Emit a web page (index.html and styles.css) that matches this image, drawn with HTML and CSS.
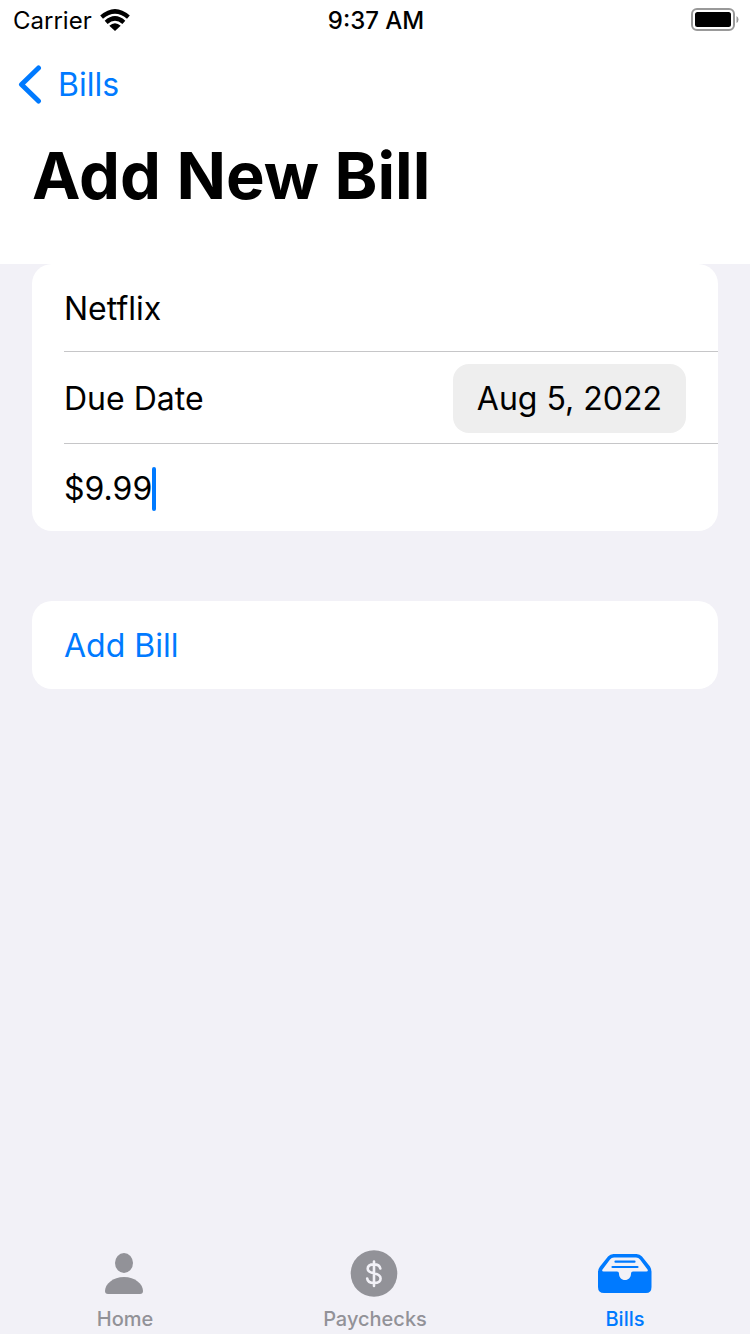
FILE: index.html
```html
<!DOCTYPE html>
<html lang="en">
<head>
<meta charset="utf-8">
<meta name="viewport" content="width=device-width, initial-scale=1">
<title>Add New Bill</title>
<link rel="stylesheet" href="styles.css">
</head>
<body>
<header class="header">
  <div class="status">
    <div class="carrier">
      <span>Carrier</span>
      <svg class="wifi" width="30" height="24" viewBox="0 0 30 24" aria-hidden="true">
        <path d="M0.200 6.600Q15-6.600 29.800 6.600L27 9.800Q15-0.400 3 9.800Z"/>
        <path d="M4.700 11.700Q15 2.500 25.300 11.700L22.400 14.900Q15 8.600 7.600 14.900Z"/>
        <path d="M9.300 16.700Q15 11.700 20.700 16.700L15 22Z"/>
      </svg>
    </div>
    <div class="time">9:37 AM</div>
    <svg class="battery" width="48" height="26" viewBox="0 0 48 26" aria-hidden="true">
      <rect x="1" y="1" width="42" height="21" rx="5" fill="none" stroke="#999" stroke-width="2"/>
      <rect x="4" y="4" width="36" height="15" rx="2.500"/>
      <path d="M45.500 8Q47.500 9 47.500 11.500T45.500 15Z" fill="#999"/>
    </svg>
  </div>
  <nav class="nav">
    <a class="back" href="#bills">
      <svg width="26" height="40" viewBox="0 0 26 40" aria-hidden="true">
        <path d="M22.500 3L5.500 19.500L22.500 36" fill="none" stroke="currentColor" stroke-width="5" stroke-linecap="round" stroke-linejoin="round"/>
      </svg>
      <span>Bills</span>
    </a>
  </nav>
  <h1 class="title">Add New Bill</h1>
</header>
<main class="content">
  <form class="form">
    <div class="card">
      <div class="row">
        <input class="field" type="text" value="Netflix" aria-label="Bill name">
      </div>
      <div class="row row-date">
        <label for="due">Due Date</label>
        <button class="date" id="due" type="button">Aug 5, 2022</button>
      </div>
      <div class="row">
        <input class="field amount" type="text" size="4" value="$9.99" aria-label="Amount">
        <span class="caret"></span>
      </div>
    </div>
    <div class="card">
      <button class="submit" type="button">Add Bill</button>
    </div>
  </form>
</main>
<nav class="tabs">
  <a class="tab" href="#home">
    <svg width="56" height="48" viewBox="0 0 56 48" aria-hidden="true">
      <ellipse cx="27" cy="14" rx="9" ry="10"/>
      <path d="M11 45Q8 45 8 42C8 35 16 28 27 28S46 35 46 42Q46 45 43 45Z"/>
    </svg>
    <span>Home</span>
  </a>
  <a class="tab" href="#paychecks">
    <svg width="56" height="48" viewBox="0 0 56 48" aria-hidden="true">
      <circle cx="27" cy="24.500" r="23.300"/>
      <path d="M33.300 19.500C32.800 16.700 30.500 15.400 27 15.400C23.300 15.400 20.700 17 20.700 19.800C20.700 22.600 23 23.500 27 24.300C31.200 25.200 33.600 26.300 33.600 29.500C33.600 32.400 30.800 34 27 34C23.300 34 20.600 32.500 20.200 29.500M27 12.500V37" fill="none" stroke="#f2f1f7" stroke-width="2.600" stroke-linecap="round"/>
    </svg>
    <span>Paychecks</span>
  </a>
  <a class="tab active" href="#bills" aria-current="page">
    <svg width="56" height="48" viewBox="0 0 56 48" aria-hidden="true">
      <path fill-rule="evenodd" d="M16.500 5H39.500Q43 5 45 7.500L53 17.500Q54.500 20 54.500 23V38Q54.500 44 49 44H7Q1 44 1 38V23Q1 20 3 17.500L11 7.500Q13 5 16.500 5ZM17 8.500Q14.500 8.500 13 10.500L5.500 20.500Q4.500 22.500 6.500 22.500H20Q22 22.500 22 24.500C22 28.500 24.500 31 28 31S34 28.500 34 24.500Q34 22.500 36 22.500H49.500Q51.500 22.500 50.500 20.500L43 10.500Q41.500 8.500 39 8.500Z"/>
      <path d="M18.500 12.700H37.500M15.500 18H40.500" fill="none" stroke="currentColor" stroke-width="2.200" stroke-linecap="round"/>
    </svg>
    <span>Bills</span>
  </a>
</nav>
</body>
</html>
```
FILE: styles.css
```css
* {
  box-sizing: border-box;
}

body {
  margin: 0;
  min-height: 100vh;
  display: flex;
  flex-direction: column;
  background: #f2f1f7;
  color: #000;
  font-family: Inter, "Liberation Sans", sans-serif;
  font-size: 32px;
  line-height: 40px;
}

input,
button {
  margin: 0;
  padding: 0;
  border: 0;
  background: none;
  color: inherit;
  font: inherit;
  text-align: left;
}

a {
  color: inherit;
  text-decoration: none;
}

svg {
  display: block;
  fill: currentColor;
}

.header {
  background: #fff;
  padding-bottom: 48px;
}

.status {
  display: grid;
  grid-template-columns: 1fr auto 1fr;
  align-items: center;
  height: 42px;
  padding: 0 11px 0 13px;
  font-size: 24px;
}

.carrier {
  display: flex;
  align-items: center;
  gap: 8px;
}

.time {
  font-weight: 500;
}

.battery {
  justify-self: end;
}

.nav {
  display: flex;
  align-items: center;
  height: 86px;
  padding: 0 16px;
}

.back {
  display: flex;
  align-items: center;
  gap: 16px;
  color: #007aff;
}

.title {
  margin: 0;
  padding: 8px 32px 0;
  font-size: 65px;
  line-height: 80px;
  font-weight: 700;
}

.content {
  flex: 1;
  padding: 0 32px;
}

.form {
  display: flex;
  flex-direction: column;
  gap: 70px;
}

.card {
  background: #fff;
  border-radius: 20px;
  padding-left: 32px;
}

.row {
  display: flex;
  align-items: center;
  min-height: 87px;
  padding: 2px 32px 0 0;
}

.row + .row {
  border-top: 1px solid #c6c6c8;
}

.row-date {
  justify-content: space-between;
  min-height: 92px;
}

.row:last-child {
  min-height: 88px;
}

.field {
  flex: 1;
  min-width: 0;
  outline: none;
}

.amount {
  flex: none;
  field-sizing: content;
}

.caret {
  width: 4px;
  height: 44px;
  border-radius: 2px;
  background: #007aff;
}

.date {
  padding: 15px 24px 14px;
  border-radius: 16px;
  background: #eee;
}

.submit {
  width: 100%;
  height: 88px;
  padding-top: 2px;
  color: #007aff;
}

.tabs {
  display: grid;
  grid-template-columns: repeat(3, 1fr);
  padding-bottom: 2px;
  color: #929298;
  font-size: 20px;
  font-weight: 500;
  line-height: 26px;
}

.tab {
  display: flex;
  flex-direction: column;
  align-items: center;
  gap: 9px;
}

.active {
  color: #007aff;
}
```
